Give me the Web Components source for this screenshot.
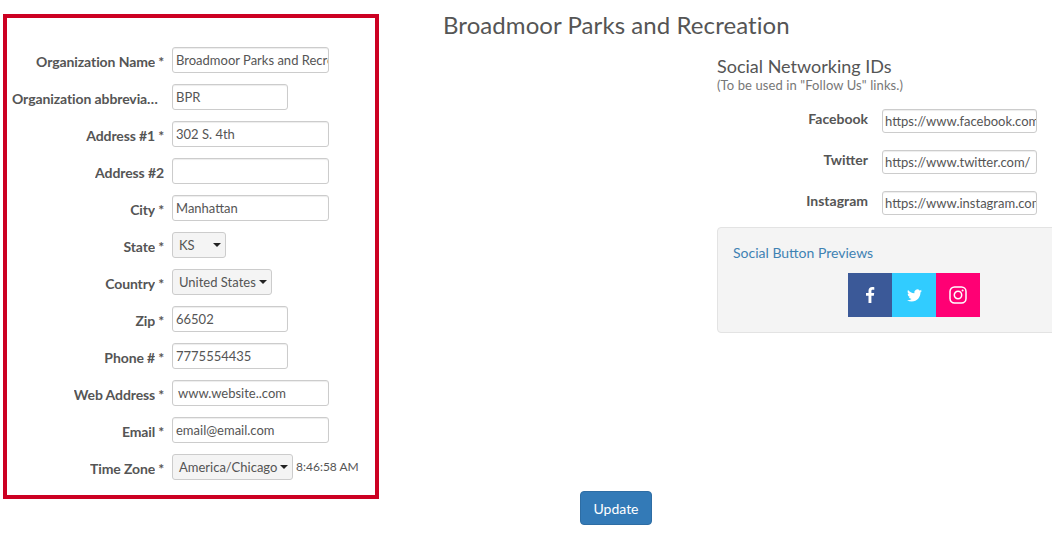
<!DOCTYPE html>
<html>
<head>
<meta charset="utf-8">
<title>Organization</title>
<style>
    html, body { margin: 0; height: 100%; overflow: hidden; background: #fff; }
    body { font-family: Lato, "Open Sans", sans-serif; font-size: 14px; color: #555; }
</style>
</head>
<body>

<org-page>
    <org-panel slot="panel">
        <form-row label="Organization Name" required><text-box size="wide">Broadmoor Parks and Recreation</text-box></form-row>
        <form-row label="Organization abbreviation" cut><text-box>BPR</text-box></form-row>
        <form-row label="Address #1" required><text-box size="wide">302 S. 4th</text-box></form-row>
        <form-row label="Address #2"><text-box size="wide"></text-box></form-row>
        <form-row label="City" required><text-box size="wide">Manhattan</text-box></form-row>
        <form-row label="State" required><select-box width="54">KS</select-box></form-row>
        <form-row label="Country" required><select-box width="100">United States</select-box></form-row>
        <form-row label="Zip" required><text-box>66502</text-box></form-row>
        <form-row label="Phone #" required><text-box>7775554435</text-box></form-row>
        <form-row label="Web Address" required><text-box size="wide" inset="5">www.website..com</text-box></form-row>
        <form-row label="Email" required><text-box size="wide">email@email.com</text-box></form-row>
        <form-row label="Time Zone" required><select-box width="121">America/Chicago</select-box><span style="font-size:12px;margin:-2px 0 0 3px;white-space:nowrap">8:46:58 AM</span></form-row>
    </org-panel>

    <span slot="title">Broadmoor Parks and Recreation</span>

    <social-section slot="social">
        <social-row label="Facebook">https://www.facebook.com/</social-row>
        <social-row label="Twitter">https://www.twitter.com/</social-row>
        <social-row label="Instagram">https://www.instagram.com/</social-row>
        <preview-well slot="preview">
            <social-tile color="#3b5998">
                <svg width="10" height="16" viewBox="0 0 10 16"><path fill="#fff" d="M6.4 16V8.700h2.400l.4-2.800H6.400V4.100c0-.8.2-1.400 1.400-1.400h1.500V.2C9 .1 8.200 0 7.200 0 5 0 3.500 1.300 3.500 3.800v2.100H1v2.800h2.500V16z"/></svg>
            </social-tile>
            <social-tile color="#31ccff">
                <svg width="15" height="15" viewBox="0 0 24 24"><path fill="#fff" d="M23.953 4.57a10 10 0 01-2.825.775 4.958 4.958 0 002.163-2.723c-.951.555-2.005.959-3.127 1.184a4.92 4.92 0 00-8.384 4.482C7.69 8.095 4.067 6.13 1.64 3.162a4.822 4.822 0 00-.666 2.475c0 1.71.87 3.213 2.188 4.096a4.904 4.904 0 01-2.228-.616v.06a4.923 4.923 0 003.946 4.827 4.996 4.996 0 01-2.212.085 4.936 4.936 0 004.604 3.417 9.867 9.867 0 01-6.102 2.105c-.39 0-.779-.023-1.17-.067a13.995 13.995 0 007.557 2.209c9.053 0 13.998-7.496 13.998-13.985 0-.21 0-.42-.015-.63A9.935 9.935 0 0024 4.59z"/></svg>
            </social-tile>
            <social-tile color="#ff0074">
                <svg width="18" height="18" viewBox="0 0 18 18" fill="none" stroke="#fff"><rect x="1" y="1" width="16" height="16" rx="4.500" stroke-width="1.500"/><circle cx="9" cy="9" r="3.700" stroke-width="1.500"/><circle cx="13.600" cy="4.400" r="1" fill="#fff" stroke="none"/></svg>
            </social-tile>
        </preview-well>
    </social-section>

    <push-button slot="action">Update</push-button>
</org-page>

<script>
    // small helper, every element gets an open shadow root from a string
    class BaseElement extends HTMLElement {
        constructor() {
            super();
            this.attachShadow({mode: 'open'}).innerHTML = this.constructor.markup;
        }
    }

    class OrgPage extends BaseElement {
        static get markup() { return `
            <style>
                :host { display: flex; align-items: flex-start; width: 1052px; height: 533px; }
                .left { flex: none; margin: 14px 0 0 3px; }
                .main { flex: 1; min-width: 0; padding: 0 0 0 64px; display: flex; flex-direction: column; height: 525px; }
                h1 { margin: 0; padding-top: 11px; font-size: 24px; line-height: 28px; font-weight: 400; color: #555; white-space: nowrap; letter-spacing: .07px; }
                .social { margin: 17px 0 0 274px; }
                .action { margin: auto 0 0 137px; }
            </style>
            <div class="left"><slot name="panel"></slot></div>
            <div class="main">
                <h1><slot name="title"></slot></h1>
                <div class="social"><slot name="social"></slot></div>
                <div class="action"><slot name="action"></slot></div>
            </div>`; }
    }

    class OrgPanel extends BaseElement {
        static get markup() { return `
            <style>
                :host { display: flex; flex-direction: column; gap: 11px; box-sizing: border-box; width: 376px; height: 485px; padding: 29px 0 0 5px; border: 4px solid #cc0022; }
            </style>
            <slot></slot>`; }
    }

    class FormRow extends BaseElement {
        static get markup() { return `
            <style>
                :host { display: flex; align-items: center; height: 26px; }
                .label { flex: none; box-sizing: border-box; width: 152px; display: flex; justify-content: flex-end; font-weight: 700; color: #555; padding-top: 2px; margin-right: 8px; letter-spacing: -0.1px; }
                :host([cut]) .label { padding-right: 5px; }
                .text { overflow: hidden; text-overflow: ellipsis; white-space: nowrap; }
                .star { flex: none; margin-left: 3px; }
                .star[hidden] { display: none; }
                .control { display: flex; align-items: center; }
            </style>
            <div class="label"><span class="text"></span><span class="star">*</span></div>
            <div class="control"><slot></slot></div>`; }

        connectedCallback() {
            this.shadowRoot.querySelector('.text').textContent = this.getAttribute('label');
            this.shadowRoot.querySelector('.star').hidden = !this.hasAttribute('required');
        }
    }

    class TextBox extends BaseElement {
        static get markup() { return `
            <style>
                :host { display: block; box-sizing: border-box; width: 116px; height: 26px; padding: 0 3px; border: 1px solid #ccc; border-radius: 3px; background: #fff; box-shadow: inset 0 1px 1px rgba(0,0,0,.075); overflow: hidden; white-space: nowrap; font-size: 13px; line-height: 24px; color: #555; }
                :host([size="wide"]) { width: 157px; }
            </style>
            <slot></slot>`; }

        connectedCallback() {
            if (this.hasAttribute('inset')) {
                this.style.paddingLeft = this.getAttribute('inset') + 'px';
            }
        }
    }

    class SelectBox extends BaseElement {
        static get markup() { return `
            <style>
                :host { display: flex; align-items: center; justify-content: space-between; box-sizing: border-box; height: 26px; padding: 0 4px 0 6px; border: 1px solid #ccc; border-radius: 3px; background: #f4f4f4; white-space: nowrap; font-size: 13px; color: #555; }
                i { flex: none; width: 0; height: 0; margin-left: 3px; border: 4px solid transparent; border-top-color: #222; border-bottom: 0; }
            </style>
            <span><slot></slot></span><i></i>`; }

        connectedCallback() {
            this.style.width = this.getAttribute('width') + 'px';
        }
    }

    class SocialSection extends BaseElement {
        static get markup() { return `
            <style>
                :host { display: block; width: 345px; }
                h2 { margin: 0; font-size: 18px; line-height: 20px; font-weight: 400; color: #555; }
                p { margin: 0 0 15px; font-size: 13px; line-height: 18px; color: #777; letter-spacing: .1px; }
                .rows { display: flex; flex-direction: column; gap: 17px; }
                .preview { margin-top: 12px; }
            </style>
            <h2>Social Networking IDs</h2>
            <p>(To be used in "Follow Us" links.)</p>
            <div class="rows"><slot></slot></div>
            <div class="preview"><slot name="preview"></slot></div>`; }
    }

    class SocialRow extends BaseElement {
        static get markup() { return `
            <style>
                :host { display: flex; align-items: center; height: 24px; }
                .label { flex: none; width: 151px; text-align: right; font-weight: 700; color: #555; margin: -5px 14px 0 0; }
                .box { flex: none; box-sizing: border-box; width: 155px; height: 24px; padding: 0 2px; border: 1px solid #ccc; border-radius: 3px; box-shadow: inset 0 1px 1px rgba(0,0,0,.075); overflow: hidden; white-space: nowrap; font-size: 13px; line-height: 22px; color: #555; }
            </style>
            <div class="label"></div>
            <div class="box"><slot></slot></div>`; }

        connectedCallback() {
            this.shadowRoot.querySelector('.label').textContent = this.getAttribute('label');
        }
    }

    class PreviewWell extends BaseElement {
        static get markup() { return `
            <style>
                :host { display: block; box-sizing: border-box; width: 345px; height: 106px; padding: 15px 15px 0; border: 1px solid #e3e3e3; border-radius: 4px; background: #f4f4f4; }
                .title { font-size: 14px; line-height: 20px; color: #3f82b3; }
                .tiles { display: flex; margin: 10px 0 0 115px; }
            </style>
            <div class="title">Social Button Previews</div>
            <div class="tiles"><slot></slot></div>`; }
    }

    class SocialTile extends BaseElement {
        static get markup() { return `
            <style>
                :host { display: flex; align-items: center; justify-content: center; width: 44px; height: 44px; }
            </style>
            <slot></slot>`; }

        connectedCallback() {
            this.style.background = this.getAttribute('color');
        }
    }

    class PushButton extends BaseElement {
        static get markup() { return `
            <style>
                :host { display: inline-flex; align-items: center; justify-content: center; box-sizing: border-box; width: 72px; height: 34px; border: 1px solid #2e6da4; border-radius: 4px; background: #337ab7; color: #fff; font-size: 14px; }
            </style>
            <slot></slot>`; }
    }

    customElements.define('org-page', OrgPage);
    customElements.define('org-panel', OrgPanel);
    customElements.define('form-row', FormRow);
    customElements.define('text-box', TextBox);
    customElements.define('select-box', SelectBox);
    customElements.define('social-section', SocialSection);
    customElements.define('social-row', SocialRow);
    customElements.define('preview-well', PreviewWell);
    customElements.define('social-tile', SocialTile);
    customElements.define('push-button', PushButton);
</script>
</body>
</html>
